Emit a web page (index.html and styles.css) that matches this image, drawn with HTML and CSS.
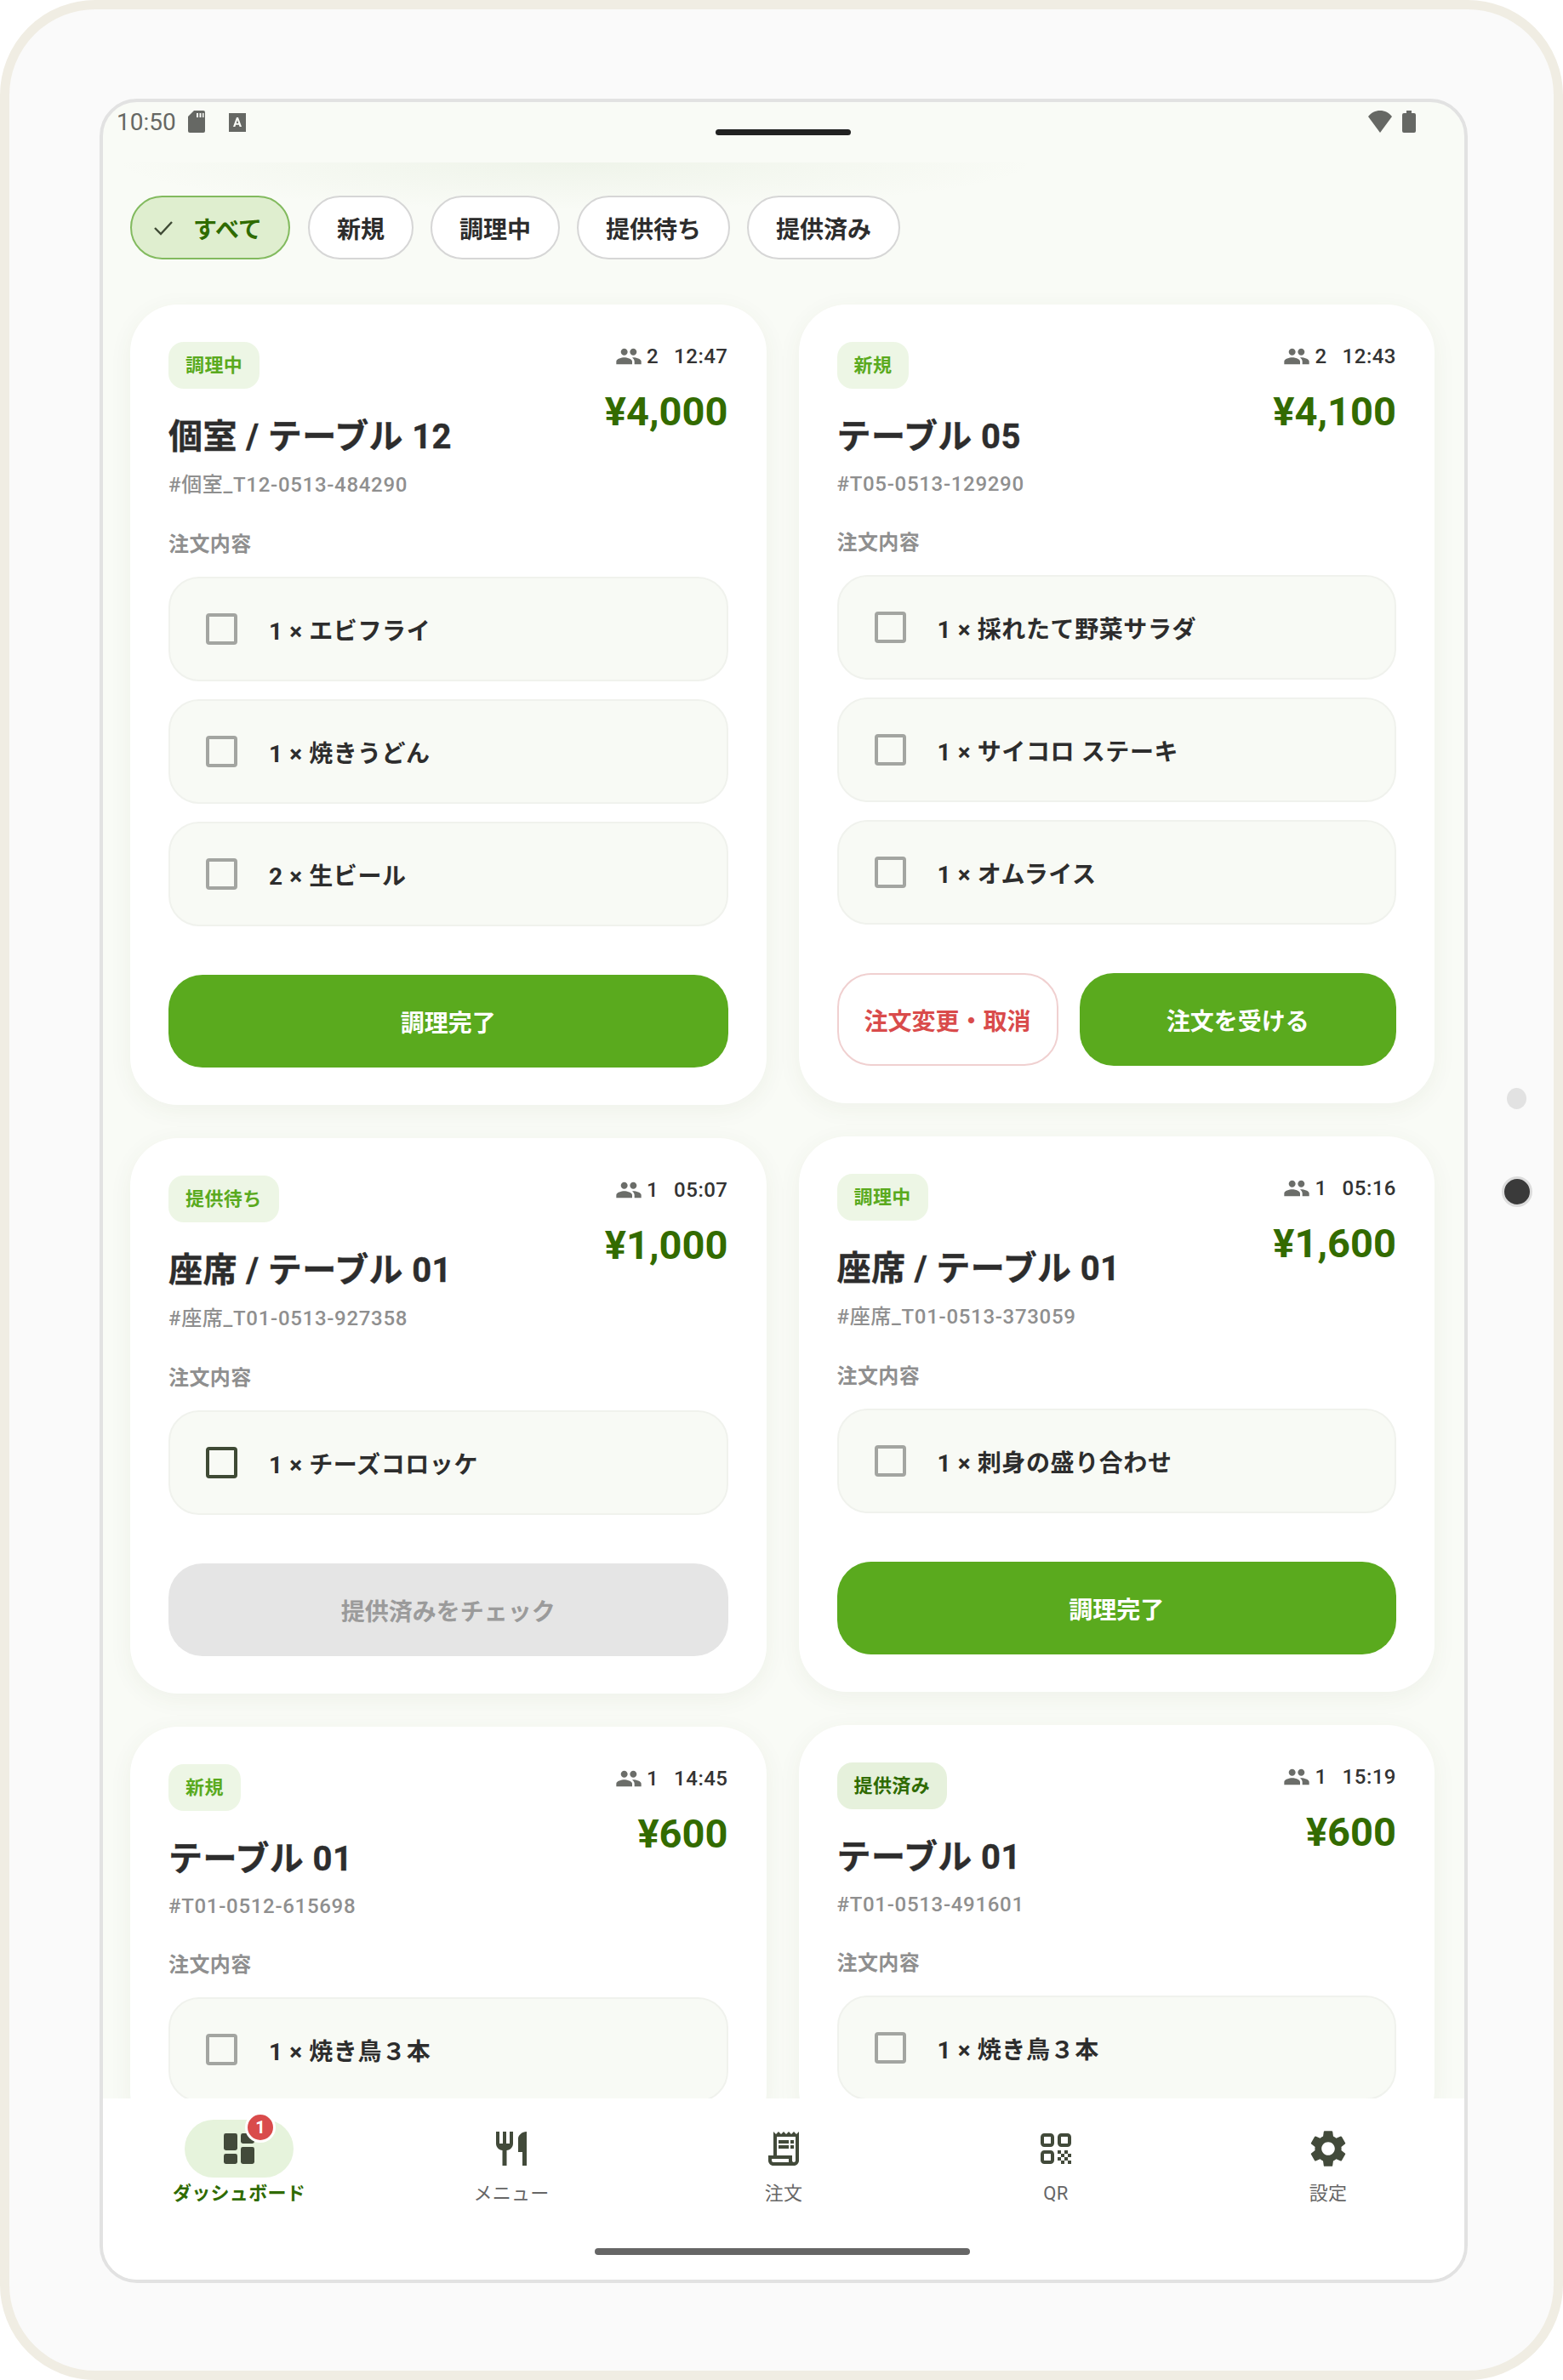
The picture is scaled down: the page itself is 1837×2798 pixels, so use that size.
FILE: index.html
```html
<!DOCTYPE html>
<html lang="ja">
<head>
    <meta charset="UTF-8">
    <meta name="viewport" content="width=device-width, initial-scale=1.0">
    <title>ダッシュボード</title>
    <link rel="stylesheet" href="styles.css">
</head>
<body>
    <div class="tablet">
        <span class="side-dot"></span>
        <span class="side-camera"></span>

        <div class="screen">
            <!-- ステータスバー -->
            <div class="status-bar">
                <div class="status-left">
                    <span class="status-time">10:50</span>
                    <svg class="status-sd" viewBox="0 0 20 26"><path d="M7 0h11a2 2 0 0 1 2 2v22a2 2 0 0 1-2 2H2a2 2 0 0 1-2-2V7z" fill="#666864"/><path d="M10 3h2v5h-2zM13.500 3h2v5h-2zM17 3h1.500v5H17z" fill="#f9fbf6"/></svg>
                    <svg class="status-a" viewBox="0 0 20 22"><rect width="20" height="22" fill="#666864"/><path d="M5 16 9 5h2l4 11h-2.400l-.7-2.200H8.100L7.400 16zM8.800 11.900h2.400L10 8z" fill="#f9fbf6"/></svg>
                </div>
                <span class="status-notch"></span>
                <div class="status-right">
                    <svg class="status-wifi" viewBox="0 0 28 26"><path d="M14 26 0 7c3.500-4.500 8.500-7 14-7s10.500 2.500 14 7z" fill="#666864"/></svg>
                    <svg class="status-battery" viewBox="0 0 16 26"><path d="M5 0h6v3h3a2 2 0 0 1 2 2v19a2 2 0 0 1-2 2H2a2 2 0 0 1-2-2V5a2 2 0 0 1 2-2h3z" fill="#666864"/></svg>
                </div>
            </div>

            <main class="orders">
                <div class="chips">
                    <button class="chip chip-active">
                        <svg class="chip-check" viewBox="0 0 24 18"><path d="M2 9l7 7L22 2" fill="none" stroke="#3f4a35" stroke-width="2.400"/></svg>
                        すべて
                    </button>
                    <button class="chip">新規</button>
                    <button class="chip">調理中</button>
                    <button class="chip">提供待ち</button>
                    <button class="chip">提供済み</button>
                </div>

                <div class="columns">
                    <div class="column">
                        <!-- 個室 テーブル12 -->
                        <section class="card">
                            <div class="card-head">
                                <div>
                                    <span class="badge badge-green">調理中</span>
                                    <h2 class="card-title">個室 / テーブル 12</h2>
                                    <p class="card-id card-id-jp">#個室_T12-0513-484290</p>
                                </div>
                                <div class="card-side">
                                    <div class="meta">
                                        <svg class="meta-icon" viewBox="0 0 24 24"><path d="M16 11c1.660 0 2.990-1.340 2.990-3S17.660 5 16 5c-1.660 0-3 1.340-3 3s1.340 3 3 3zm-8 0c1.660 0 2.990-1.340 2.990-3S9.660 5 8 5C6.340 5 5 6.340 5 8s1.340 3 3 3zm0 2c-2.330 0-7 1.170-7 3.500V19h14v-2.500c0-2.330-4.670-3.500-7-3.500zm8 0c-.29 0-.62.02-.97.05 1.160.84 1.970 1.970 1.970 3.450V19h6v-2.500c0-2.330-4.670-3.500-7-3.500z"/></svg>
                                        <span>2</span><span class="meta-time">12:47</span>
                                    </div>
                                    <div class="price">¥4,000</div>
                                </div>
                            </div>
                            <p class="items-label">注文内容</p>
                            <ul class="items">
                                <li class="item"><span class="check"></span>1 × エビフライ</li>
                                <li class="item"><span class="check"></span>1 × 焼きうどん</li>
                                <li class="item"><span class="check"></span>2 × 生ビール</li>
                            </ul>
                            <div class="actions">
                                <button class="btn btn-primary">調理完了</button>
                            </div>
                        </section>

                        <!-- 座席 テーブル01 提供待ち -->
                        <section class="card">
                            <div class="card-head">
                                <div>
                                    <span class="badge badge-green">提供待ち</span>
                                    <h2 class="card-title">座席 / テーブル 01</h2>
                                    <p class="card-id card-id-jp">#座席_T01-0513-927358</p>
                                </div>
                                <div class="card-side">
                                    <div class="meta">
                                        <svg class="meta-icon" viewBox="0 0 24 24"><path d="M16 11c1.660 0 2.990-1.340 2.990-3S17.660 5 16 5c-1.660 0-3 1.340-3 3s1.340 3 3 3zm-8 0c1.660 0 2.990-1.340 2.990-3S9.660 5 8 5C6.340 5 5 6.340 5 8s1.340 3 3 3zm0 2c-2.330 0-7 1.170-7 3.500V19h14v-2.500c0-2.330-4.670-3.500-7-3.500zm8 0c-.29 0-.62.02-.97.05 1.160.84 1.970 1.970 1.970 3.450V19h6v-2.500c0-2.330-4.670-3.500-7-3.500z"/></svg>
                                        <span>1</span><span class="meta-time">05:07</span>
                                    </div>
                                    <div class="price">¥1,000</div>
                                </div>
                            </div>
                            <p class="items-label">注文内容</p>
                            <ul class="items">
                                <li class="item"><span class="check check-dark"></span>1 × チーズコロッケ</li>
                            </ul>
                            <div class="actions">
                                <button class="btn btn-disabled">提供済みをチェック</button>
                            </div>
                        </section>

                        <!-- テーブル01 新規 -->
                        <section class="card">
                            <div class="card-head">
                                <div>
                                    <span class="badge badge-green">新規</span>
                                    <h2 class="card-title">テーブル 01</h2>
                                    <p class="card-id">#T01-0512-615698</p>
                                </div>
                                <div class="card-side">
                                    <div class="meta">
                                        <svg class="meta-icon" viewBox="0 0 24 24"><path d="M16 11c1.660 0 2.990-1.340 2.990-3S17.660 5 16 5c-1.660 0-3 1.340-3 3s1.340 3 3 3zm-8 0c1.660 0 2.990-1.340 2.990-3S9.660 5 8 5C6.340 5 5 6.340 5 8s1.340 3 3 3zm0 2c-2.330 0-7 1.170-7 3.500V19h14v-2.500c0-2.330-4.670-3.500-7-3.500zm8 0c-.29 0-.62.02-.97.05 1.160.84 1.970 1.970 1.970 3.450V19h6v-2.500c0-2.330-4.670-3.500-7-3.500z"/></svg>
                                        <span>1</span><span class="meta-time">14:45</span>
                                    </div>
                                    <div class="price">¥600</div>
                                </div>
                            </div>
                            <p class="items-label">注文内容</p>
                            <ul class="items">
                                <li class="item"><span class="check"></span>1 × 焼き鳥３本</li>
                            </ul>
                        </section>
                    </div>

                    <div class="column">
                        <!-- テーブル05 -->
                        <section class="card">
                            <div class="card-head">
                                <div>
                                    <span class="badge badge-green">新規</span>
                                    <h2 class="card-title">テーブル 05</h2>
                                    <p class="card-id">#T05-0513-129290</p>
                                </div>
                                <div class="card-side">
                                    <div class="meta">
                                        <svg class="meta-icon" viewBox="0 0 24 24"><path d="M16 11c1.660 0 2.990-1.340 2.990-3S17.660 5 16 5c-1.660 0-3 1.340-3 3s1.340 3 3 3zm-8 0c1.660 0 2.990-1.340 2.990-3S9.660 5 8 5C6.340 5 5 6.340 5 8s1.340 3 3 3zm0 2c-2.330 0-7 1.170-7 3.500V19h14v-2.500c0-2.330-4.670-3.500-7-3.500zm8 0c-.29 0-.62.02-.97.05 1.160.84 1.970 1.970 1.970 3.450V19h6v-2.500c0-2.330-4.670-3.500-7-3.500z"/></svg>
                                        <span>2</span><span class="meta-time">12:43</span>
                                    </div>
                                    <div class="price">¥4,100</div>
                                </div>
                            </div>
                            <p class="items-label">注文内容</p>
                            <ul class="items">
                                <li class="item"><span class="check"></span>1 × 採れたて野菜サラダ</li>
                                <li class="item"><span class="check"></span>1 × サイコロ ステーキ</li>
                                <li class="item"><span class="check"></span>1 × オムライス</li>
                            </ul>
                            <div class="actions">
                                <button class="btn btn-cancel">注文変更・取消</button>
                                <button class="btn btn-primary">注文を受ける</button>
                            </div>
                        </section>

                        <!-- 座席 テーブル01 調理中 -->
                        <section class="card">
                            <div class="card-head">
                                <div>
                                    <span class="badge badge-green">調理中</span>
                                    <h2 class="card-title">座席 / テーブル 01</h2>
                                    <p class="card-id card-id-jp">#座席_T01-0513-373059</p>
                                </div>
                                <div class="card-side">
                                    <div class="meta">
                                        <svg class="meta-icon" viewBox="0 0 24 24"><path d="M16 11c1.660 0 2.990-1.340 2.990-3S17.660 5 16 5c-1.660 0-3 1.340-3 3s1.340 3 3 3zm-8 0c1.660 0 2.990-1.340 2.990-3S9.660 5 8 5C6.340 5 5 6.340 5 8s1.340 3 3 3zm0 2c-2.330 0-7 1.170-7 3.500V19h14v-2.500c0-2.330-4.670-3.500-7-3.500zm8 0c-.29 0-.62.02-.97.05 1.160.84 1.970 1.970 1.970 3.450V19h6v-2.500c0-2.330-4.670-3.500-7-3.500z"/></svg>
                                        <span>1</span><span class="meta-time">05:16</span>
                                    </div>
                                    <div class="price">¥1,600</div>
                                </div>
                            </div>
                            <p class="items-label">注文内容</p>
                            <ul class="items">
                                <li class="item"><span class="check"></span>1 × 刺身の盛り合わせ</li>
                            </ul>
                            <div class="actions">
                                <button class="btn btn-primary">調理完了</button>
                            </div>
                        </section>

                        <!-- テーブル01 提供済み -->
                        <section class="card">
                            <div class="card-head">
                                <div>
                                    <span class="badge badge-dark">提供済み</span>
                                    <h2 class="card-title">テーブル 01</h2>
                                    <p class="card-id">#T01-0513-491601</p>
                                </div>
                                <div class="card-side">
                                    <div class="meta">
                                        <svg class="meta-icon" viewBox="0 0 24 24"><path d="M16 11c1.660 0 2.990-1.340 2.990-3S17.660 5 16 5c-1.660 0-3 1.340-3 3s1.340 3 3 3zm-8 0c1.660 0 2.990-1.340 2.990-3S9.660 5 8 5C6.340 5 5 6.340 5 8s1.340 3 3 3zm0 2c-2.330 0-7 1.170-7 3.500V19h14v-2.500c0-2.330-4.670-3.500-7-3.500zm8 0c-.29 0-.62.02-.97.05 1.160.84 1.970 1.970 1.970 3.450V19h6v-2.500c0-2.330-4.670-3.500-7-3.500z"/></svg>
                                        <span>1</span><span class="meta-time">15:19</span>
                                    </div>
                                    <div class="price">¥600</div>
                                </div>
                            </div>
                            <p class="items-label">注文内容</p>
                            <ul class="items">
                                <li class="item"><span class="check"></span>1 × 焼き鳥３本</li>
                            </ul>
                        </section>
                    </div>
                </div>
            </main>

            <!-- 下部ナビ -->
            <nav class="bottom-nav">
                <div class="tabs">
                    <a href="#" class="tab tab-active">
                        <span class="tab-pill">
                            <svg class="tab-icon" viewBox="0 0 24 24"><rect x="3" y="3" width="8" height="10" rx="1.200"/><rect x="3" y="15" width="8" height="6" rx="1.200"/><rect x="13" y="3" width="8" height="6" rx="1.200"/><rect x="13" y="11" width="8" height="10" rx="1.200"/></svg>
                            <span class="tab-badge">1</span>
                        </span>
                        ダッシュボード
                    </a>
                    <a href="#" class="tab">
                        <span class="tab-pill">
                            <svg class="tab-icon" viewBox="0 0 24 24"><path d="M11 9H9V2H7v7H5V2H3v7c0 2.120 1.660 3.840 3.750 3.970V22h2.500v-9.030C11.340 12.840 13 11.120 13 9V2h-2v7zm5-3v8h2.500v8H21V2c-2.760 0-5 2.240-5 4z"/></svg>
                        </span>
                        メニュー
                    </a>
                    <a href="#" class="tab">
                        <span class="tab-pill">
                            <svg class="tab-icon" viewBox="0 0 24 24"><path d="M19.500 3.500 18 2l-1.500 1.500L15 2l-1.500 1.500L12 2l-1.500 1.500L9 2 7.500 3.500 6 2v14H3v3c0 1.660 1.340 3 3 3h12c1.660 0 3-1.340 3-3V2l-1.500 1.500zM15 20H6c-.55 0-1-.45-1-1v-1h10v2zm4-1c0 .55-.45 1-1 1s-1-.45-1-1v-3H8V5h11v14z"/><path d="M9 7h6v2H9zm7 0h2v2h-2zM9 10h6v2H9zm7 0h2v2h-2z"/></svg>
                        </span>
                        注文
                    </a>
                    <a href="#" class="tab">
                        <span class="tab-pill">
                            <svg class="tab-icon" viewBox="0 0 24 24"><g fill="none" stroke="#424a3a" stroke-width="2"><rect x="4" y="4" width="6" height="6" rx="1.200"/><rect x="14" y="4" width="6" height="6" rx="1.200"/><rect x="4" y="14" width="6" height="6" rx="1.200"/></g><path d="M13 13h2v2h-2zM17 13h2v2h-2zM15 15h2v2h-2zM19 15h2v2h-2zM13 17h2v2h-2zM17 17h2v2h-2zM15 19h2v2h-2zM19 19h2v2h-2z"/></svg>
                        </span>
                        QR
                    </a>
                    <a href="#" class="tab">
                        <span class="tab-pill">
                            <svg class="tab-icon tab-icon-gear" viewBox="0 0 24 24"><path d="M19.140 12.940c.04-.3.06-.61.06-.94 0-.32-.02-.64-.07-.94l2.030-1.580c.18-.14.23-.41.12-.61l-1.920-3.320c-.12-.22-.37-.29-.59-.22l-2.390.96c-.5-.38-1.030-.7-1.620-.94l-.36-2.540c-.04-.24-.24-.41-.48-.41h-3.840c-.24 0-.43.17-.47.41l-.36 2.540c-.59.24-1.130.57-1.620.94l-2.390-.96c-.22-.08-.47 0-.59.22L2.740 8.870c-.12.21-.08.47.12.61l2.030 1.580c-.05.3-.09.63-.09.94s.02.64.07.94l-2.030 1.580c-.18.14-.23.41-.12.61l1.920 3.320c.12.22.37.29.59.22l2.390-.96c.5.38 1.030.7 1.620.94l.36 2.540c.05.24.24.41.48.41h3.840c.24 0 .44-.17.47-.41l.36-2.540c.59-.24 1.130-.56 1.620-.94l2.390.96c.22.08.47 0 .59-.22l1.920-3.320c.12-.22.07-.47-.12-.61l-2.010-1.580zM12 15.600c-1.980 0-3.600-1.620-3.600-3.600s1.620-3.600 3.600-3.600 3.600 1.620 3.600 3.600-1.620 3.600-3.600 3.600z"/></svg>
                        </span>
                        設定
                    </a>
                </div>
                <span class="home-bar"></span>
            </nav>
        </div>
    </div>
</body>
</html>
```

FILE: styles.css
```css
* {
    margin: 0;
    padding: 0;
    box-sizing: border-box;
    font-family: Roboto, "Noto Sans CJK JP", sans-serif;
}

body {
    background-color: #fff;
}

button {
    font-family: inherit;
    border: none;
}

ul {
    list-style: none;
}

a {
    text-decoration: none;
}

/* 端末フレーム */
.tablet {
    position: relative;
    width: 1837px;
    height: 2798px;
    padding: 105px 101px 103px 106px;
    background-color: #fafafa;
    border: 11px solid #f0ede3;
    border-radius: 112px;
}

.side-dot {
    position: absolute;
    left: 1760px;
    top: 1268px;
    width: 23px;
    height: 25px;
    border-radius: 50%;
    background-color: #e2e2e2;
}

.side-camera {
    position: absolute;
    left: 1754px;
    top: 1372px;
    width: 36px;
    height: 36px;
    border-radius: 50%;
    background-color: #3a3a3a;
    border: 3px solid #dcdcdc;
}

.screen {
    display: flex;
    flex-direction: column;
    height: 100%;
    overflow: hidden;
    background-color: #f9fbf6;
    border: 4px solid #e2e2e2;
    border-radius: 44px;
}

/* ステータスバー */
.status-bar {
    position: relative;
    display: flex;
    justify-content: space-between;
    flex-shrink: 0;
    height: 71px;
    padding: 10px 57px 0 16px;
}

.status-left,
.status-right {
    display: flex;
    align-items: flex-start;
}

.status-time {
    font-size: 28px;
    line-height: 28px;
    color: #666864;
}

.status-sd {
    width: 20px;
    height: 26px;
    margin-left: 14px;
}

.status-a {
    width: 20px;
    height: 22px;
    margin: 3px 0 0 28px;
}

.status-wifi {
    width: 28px;
    height: 26px;
}

.status-battery {
    width: 16px;
    height: 26px;
    margin-left: 12px;
}

.status-notch {
    position: absolute;
    left: 720px;
    top: 32px;
    width: 159px;
    height: 7px;
    border-radius: 4px;
    background-color: #222;
}

/* 注文一覧 */
.orders {
    position: relative;
    flex: 1;
    min-height: 0;
    overflow: hidden;
    padding: 39px 35px 0 32px;
}

.orders::before {
    content: "";
    position: absolute;
    left: 10px;
    top: 0;
    width: 1090px;
    height: 56px;
    background: radial-gradient(ellipse 50% 100% at 50% 0, rgba(120, 160, 90, 0.08), rgba(120, 160, 90, 0));
}

.chips {
    position: relative;
    display: flex;
    gap: 20px;
    margin-bottom: 53px;
}

.chip {
    display: flex;
    align-items: center;
    height: 75px;
    padding: 0 32px;
    font-size: 28px;
    font-weight: 700;
    color: #2d2d2d;
    background-color: #fff;
    border: 2px solid #d6d6d6;
    border-radius: 38px;
}

.chip-active {
    padding: 0 31px 0 25px;
    color: #2f6b00;
    background-color: #dfeecf;
    border-color: #82ba5e;
}

.chip-check {
    width: 24px;
    height: 18px;
    margin-right: 23px;
}

.chip-active + .chip {
    margin-left: 1px;
}

.columns {
    display: flex;
    gap: 38px;
}

.column {
    flex: 1;
    min-width: 0;
    display: flex;
    flex-direction: column;
    gap: 39px;
}

/* カード */
.card {
    padding: 44px 45px;
    background-color: #fff;
    border-radius: 56px;
    box-shadow: 0 6px 28px rgba(60, 80, 40, 0.06);
}

.card-head {
    display: flex;
    justify-content: space-between;
    align-items: flex-start;
}

.badge {
    display: inline-block;
    height: 55px;
    padding: 0 20px;
    font-size: 22px;
    font-weight: 700;
    line-height: 55px;
    letter-spacing: 0.4px;
    border-radius: 18px;
    vertical-align: top;
}

.badge-green {
    color: #5aaa1e;
    background-color: #edf6e5;
}

.badge-dark {
    color: #2f6b00;
    background-color: #e6f1dc;
}

.card-title {
    margin-top: 31px;
    font-size: 40px;
    font-weight: 700;
    line-height: 52px;
    letter-spacing: 0.4px;
    color: #2d2d2d;
    -webkit-text-stroke: 0.4px #2d2d2d;
}

.card-id {
    margin-top: 13px;
    font-size: 24px;
    font-weight: 500;
    line-height: 32px;
    letter-spacing: 0.7px;
    color: #8f8f8f;
}

.card-id-jp {
    line-height: 34px;
}

.card-side {
    display: flex;
    flex-direction: column;
    align-items: flex-end;
}

.meta {
    display: flex;
    align-items: center;
    height: 34px;
    font-size: 24px;
    font-weight: 500;
    letter-spacing: 0.5px;
    color: #333;
}

.meta-icon {
    width: 32px;
    height: 32px;
    margin-right: 5px;
    fill: #6b6d69;
}

.meta-time {
    margin-left: 18px;
}

.price {
    margin-top: 20px;
    font-size: 47px;
    font-weight: 700;
    line-height: 56px;
    color: #336b00;
}

.items-label {
    margin-top: 36px;
    font-size: 24px;
    font-weight: 700;
    line-height: 34px;
    letter-spacing: 0.4px;
    color: #8f8f8f;
}

.items {
    display: flex;
    flex-direction: column;
    gap: 21px;
    margin-top: 21px;
}

.item {
    display: flex;
    align-items: center;
    height: 123px;
    padding-left: 42px;
    font-size: 28px;
    font-weight: 700;
    letter-spacing: 0.6px;
    color: #2d2d2d;
    background-color: #f8faf5;
    border: 2px solid #f0f2ed;
    border-radius: 36px;
}

.check {
    width: 37px;
    height: 37px;
    margin-right: 37px;
    border: 4px solid #a3a5a1;
    border-radius: 4px;
}

.check-dark {
    border-color: #3f4a35;
}

.actions {
    display: flex;
    gap: 25px;
    margin-top: 57px;
}

.btn {
    flex: 1;
    height: 109px;
    font-size: 28px;
    font-weight: 700;
    border-radius: 40px;
}

.btn-primary {
    color: #fff;
    background-color: #5aaa1e;
}

.btn-disabled {
    color: #9b9b9b;
    background-color: #e5e5e5;
}

.btn-cancel {
    flex: 0 0 260px;
    color: #d94b4b;
    background-color: #fff;
    border: 2px solid #f0d0d0;
}

/* 下部ナビ */
.bottom-nav {
    position: relative;
    flex-shrink: 0;
    display: flex;
    flex-direction: column;
    align-items: center;
    height: 213px;
    padding-top: 25px;
    background-color: #fff;
}

.tabs {
    display: grid;
    grid-template-columns: repeat(5, 1fr);
    width: 100%;
}

.tab {
    display: flex;
    flex-direction: column;
    align-items: center;
    font-size: 22px;
    line-height: 32px;
    letter-spacing: 0.3px;
    color: #666;
}

.tab-active {
    font-weight: 700;
    color: #2f6b00;
}

.tab-pill {
    position: relative;
    display: flex;
    justify-content: center;
    align-items: center;
    width: 128px;
    height: 68px;
    margin-bottom: 3px;
    border-radius: 34px;
}

.tab-active .tab-pill {
    background-color: #e6f3dc;
}

.tab-icon {
    width: 48px;
    height: 48px;
    fill: #424a3a;
}

.tab-icon-gear {
    width: 52px;
    height: 52px;
}

.tab-badge {
    position: absolute;
    left: 71px;
    top: -9px;
    width: 36px;
    height: 36px;
    font-size: 20px;
    line-height: 30px;
    text-align: center;
    letter-spacing: 0;
    color: #fff;
    background-color: #d94b4b;
    border: 3px solid #fff;
    border-radius: 50%;
}

.home-bar {
    position: absolute;
    left: 578px;
    bottom: 29px;
    width: 441px;
    height: 8px;
    border-radius: 4px;
    background-color: #666;
}
```
